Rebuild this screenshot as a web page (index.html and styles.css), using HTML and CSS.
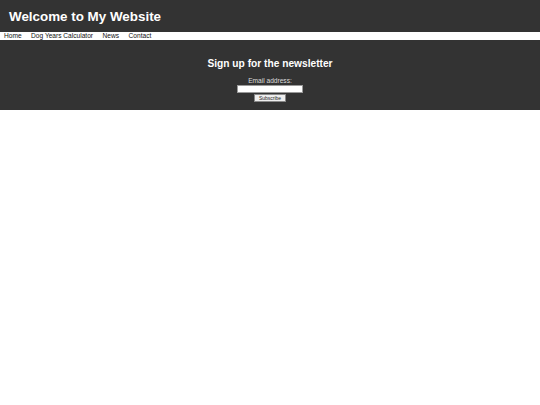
FILE: index.html
```html
<!DOCTYPE html>
<html>
<head>
  <title>My Website</title>
  <link rel="stylesheet" href="styles.css">
</head>
<body>
  <header class="site-header">
    <h1>Welcome to My Website</h1>
  </header>
  <nav class="site-nav">
    <a href="#">Home</a>
    <a href="#">Dog Years Calculator</a>
    <a href="#">News</a>
    <a href="#">Contact</a>
  </nav>
  <section class="newsletter">
    <h2>Sign up for the newsletter</h2>
    <form class="signup">
      <label for="email">Email address:</label>
      <input type="email" id="email">
      <button type="submit">Subscribe</button>
    </form>
  </section>
</body>
</html>
```

FILE: styles.css
```css
body {
  margin: 0;
  font-family: "Liberation Sans", Arial, sans-serif;
  background: #fff;
}
.site-header {
  background-color: #333;
  height: 32px;
  padding-left: 9px;
  display: flex;
  align-items: center;
}
.site-header h1 {
  margin: 0;
  color: #fff;
  font-size: 13.4px;
}
.site-nav {
  height: 8px;
  display: flex;
  gap: 9.5px;
  padding-left: 4px;
  font-size: 6.6px;
  line-height: 8px;
}
.site-nav a {
  color: #111;
  text-decoration: none;
}
.newsletter {
  background-color: #333;
  color: #fff;
  height: 70px;
  box-sizing: border-box;
  padding-top: 18px;
  text-align: center;
}
.newsletter h2 {
  margin: 0 0 8px;
  font-size: 10.2px;
}
.signup {
  display: flex;
  flex-direction: column;
  align-items: center;
  font-size: 6.6px;
}
.signup label {
  line-height: 8px;
  color: #ddd;
}
.signup input {
  width: 66px;
  height: 8px;
  box-sizing: border-box;
  border: 1px solid #999;
  padding: 0;
  margin: 0;
}
.signup button {
  margin-top: 1px;
  width: 32px;
  height: 8px;
  padding: 0;
  font-size: 5px;
  font-family: inherit;
  color: #222;
  background: #eee;
  border: 1px solid #888;
}
```
